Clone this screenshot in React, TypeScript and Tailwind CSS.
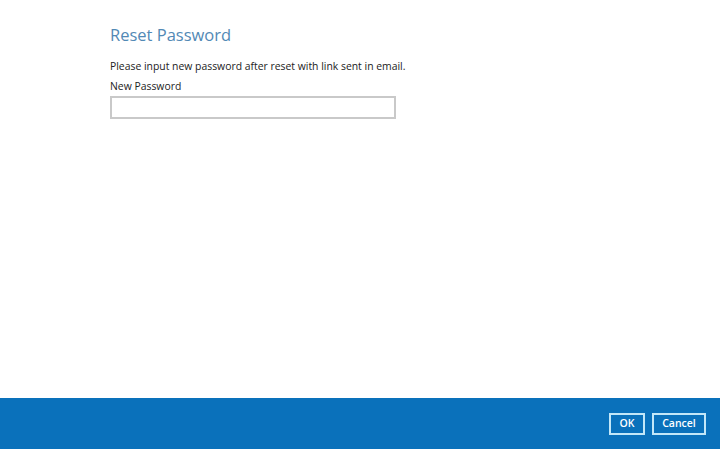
export default function App() {
  return (
    <div className="w-[720px] h-[449px] flex flex-col bg-white" style={{ fontFamily: '"Open Sans", sans-serif' }}>
      <div className="flex-1 pl-[110px] pt-[24px]">
        <h1 className="text-[16.5px] leading-[22px] text-[#5289b5] font-normal">Reset Password</h1>
        <p className="mt-[13px] text-[10.4px] leading-[15px] text-[#222]">
          Please input new password after reset with link sent in email.
        </p>
        <div className="mt-[5px] text-[10.4px] leading-[15px] text-[#222]">New Password</div>
        <input
          type="password"
          className="mt-[2px] block w-[286px] h-[23px] border-2 border-[#c9c9c9] bg-white outline-none"
        />
      </div>
      <div className="h-[51px] bg-[#0a71bb] flex items-center justify-end pr-[14px] gap-[7px]">
        <button className="h-[22px] w-[36px] border-2 border-[#c2e7f8] text-white text-[10.5px] font-semibold leading-none">
          OK
        </button>
        <button className="h-[22px] w-[54px] border-2 border-[#c2e7f8] text-white text-[10.5px] font-semibold leading-none">
          Cancel
        </button>
      </div>
    </div>
  );
}
